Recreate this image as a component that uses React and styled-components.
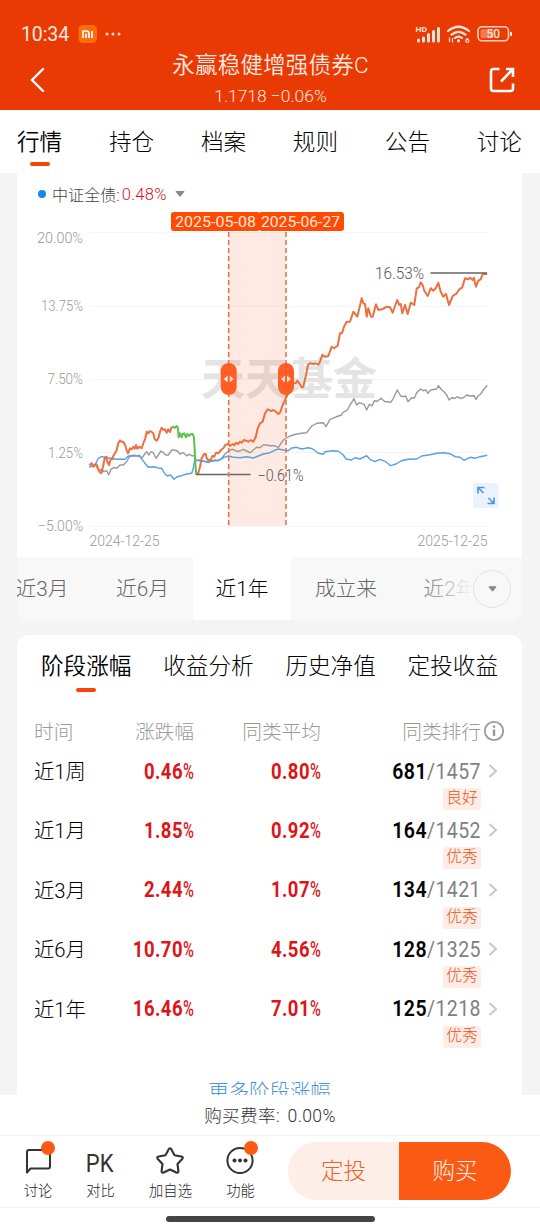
import React from "react";
import styled, { createGlobalStyle } from "styled-components";

const GlobalStyle = createGlobalStyle`
  * {
    box-sizing: border-box;
  }

  body {
    margin: 0;
    background: #f4f4f4;
    font-family: Roboto, "Noto Sans CJK SC", sans-serif;
    font-weight: 300;
    color: #111;
  }
`;

const Screen = styled.div`
  display: flex;
  flex-direction: column;
  width: 540px;
  height: 1230px;
  overflow: hidden;
  background: #f4f4f4;
  white-space: nowrap;
`;

const Header = styled.header`
  height: 110px;
  flex: none;
  background: #e93a03;
  color: #ffe9e0;
`;

const StatusBar = styled.div`
  display: flex;
  align-items: center;
  height: 50px;
  padding: 18px 27px 0 21px;
`;

const Clock = styled.span`
  width: 57px;
  font-size: 19.5px;
  font-weight: 400;
  letter-spacing: -0.1px;
`;

const StatusIcons = styled.div`
  display: flex;
  align-items: center;
  margin-left: auto;
`;

const TitleBar = styled.div`
  display: flex;
  align-items: center;
  justify-content: space-between;
  height: 60px;
  padding: 0 25px 0 29px;
`;

const Title = styled.div`
  display: flex;
  flex-direction: column;
  align-items: center;
  padding: 2px 0 0 7px;

  h1 {
    margin: 0;
    font-size: 22.5px;
    line-height: 30px;
    font-weight: 350;
    letter-spacing: 0.2px;
  }

  p {
    margin: 0;
    font-size: 17.4px;
    line-height: 32px;
  }
`;

const MainTabs = styled.nav`
  display: flex;
  justify-content: space-between;
  flex: none;
  height: 63px;
  padding: 16px 18px 0 17px;
  background: #fff;
`;

const Tab = styled.div`
  display: flex;
  flex-direction: column;
  align-items: center;
  font-size: 22.6px;
  line-height: 33px;
  font-weight: ${({ $active }) => ($active ? 350 : 300)};
  color: #000;

  &::after {
    content: "";
    width: 20px;
    height: 4px;
    margin-top: ${({ $gap }) => $gap || 4}px;
    border-radius: 2px;
    background: ${({ $active }) => ($active ? "#f4450b" : "transparent")};
  }
`;

const Content = styled.main`
  flex: 1;
  min-height: 0;
  overflow: hidden;
  padding: 0 18px 0 17px;
`;

const Card = styled.section`
  background: #fff;
  overflow: hidden;
  border-radius: ${({ $radius }) => $radius};
`;

const PerfCard = styled(Card)`
  margin-top: 15px;
`;

const Legend = styled.div`
  display: flex;
  align-items: center;
  height: 34px;
  padding: 8px 0 0 21px;
  font-size: 16.1px;
  color: #444;

  i {
    width: 8px;
    height: 8px;
    margin-right: 6px;
    border-radius: 50%;
    background: #1688e8;
  }

  b {
    margin: 0 8px 0 2px;
    font-size: 16.6px;
    font-weight: 350;
    color: #d8151b;
    letter-spacing: 0.2px;
  }
`;

const Chart = styled.svg`
  display: block;
  font-size: 15px;
  fill: #999;
`;

const RangeBar = styled.div`
  position: relative;
  height: 63px;
  overflow: hidden;
  background: #f8f8f8;
`;

const RangeList = styled.div`
  display: flex;
  width: 520px;
  height: 100%;
  margin-left: -25px;
`;

const Range = styled.div`
  flex: none;
  width: ${({ $width }) => $width}px;
  font-size: 20.7px;
  line-height: 65px;
  text-align: center;
  color: ${({ $active }) => ($active ? "#000" : "#666")};
  background: ${({ $active }) => ($active ? "#fff" : "transparent")};
`;

const RangeMore = styled.div`
  position: absolute;
  top: 0;
  right: 0;
  display: flex;
  align-items: center;
  justify-content: flex-end;
  width: 105px;
  height: 100%;
  padding-right: 11px;
  background: linear-gradient(90deg, rgba(248, 248, 248, 0), #f8f8f8 52%);

  span {
    display: grid;
    place-items: center;
    width: 38px;
    height: 38px;
    border: 1px solid #e2e2e2;
    border-radius: 50%;
  }
`;

const PerfTabs = styled.div`
  display: flex;
  justify-content: space-between;
  height: 70px;
  padding: 15px 24px 0;
`;

const Row = styled.div`
  display: grid;
  grid-template-columns: 60px 100px 127px 160px 24px;
  align-items: center;
  height: ${({ $head }) => ($head ? 51 : 30)}px;
  padding-left: 17px;
  color: ${({ $head }) => ($head ? "#999" : "#000")};
  font-size: ${({ $head }) => ($head ? 19.7 : 20.3)}px;
  text-align: right;

  > :first-child {
    text-align: left;
  }

  svg {
    justify-self: end;
  }
`;

const Label = styled.span`
  position: relative;
  top: -1px;
`;

const Period = styled.div`
  height: 59.4px;
`;

const Percent = styled.span`
  font-size: 22px;
  font-weight: 700;
  letter-spacing: 0.6px;
  color: #dd1418;
  transform: scaleX(0.84);
  transform-origin: right;

  small {
    display: inline-block;
    width: 13px;
    font-size: 22px;
    font-weight: 500;
    transform: scaleX(0.8);
    transform-origin: left;
  }
`;

const Rank = styled.span`
  font-size: 22px;
  font-weight: 400;
  letter-spacing: 0.5px;
  color: #808080;
  transform: scaleX(0.885);
  transform-origin: right;

  b {
    font-weight: 600;
    color: #000;
  }
`;

const Grade = styled.div`
  width: 38px;
  height: 22px;
  margin: 2px 0 0 426px;
  border-radius: 3px;
  background: #ffece5;
  color: #e2571e;
  font-size: 15.8px;
  line-height: 20px;
  text-align: center;
`;

const MoreLink = styled.div`
  margin-top: 24px;
  color: #4a94dc;
  font-size: 20.4px;
  line-height: 30px;
  text-align: center;
`;

const Footer = styled.footer`
  flex: none;
  height: 135px;
  background: #fff;
`;

const Fee = styled.div`
  height: 41px;
  border-bottom: 1px solid #f2f2f2;
  color: #333;
  font-size: 17.6px;
  line-height: 42px;
  letter-spacing: 0.35px;
  word-spacing: 3px;
  text-align: center;
`;

const ActionBar = styled.div`
  display: flex;
  align-items: center;
  height: 72px;
  padding-right: 29px;
  border-bottom: 1px solid #f2f2f2;
`;

const Action = styled.div`
  position: relative;
  display: flex;
  flex-direction: column;
  align-items: center;
  width: ${({ $width }) => $width}px;
  padding-top: 2px;
  color: #222;
  font-size: 14.3px;
  line-height: 22px;

  svg,
  strong {
    height: 34px;
    margin: 0 1px 2px 0;
  }

  strong {
    font-size: 26.5px;
    font-weight: 400;
    line-height: 37px;
    color: #333;
    transform: scaleX(0.83);
  }
`;

const Dot = styled.i`
  position: absolute;
  top: -1px;
  left: calc(50% + 3px);
  width: 14px;
  height: 14px;
  border-radius: 50%;
  background: #fb5a14;
`;

const Buttons = styled.div`
  display: flex;
  margin: 0 0 2px auto;
  border-radius: 29px;
  overflow: hidden;
`;

const Button = styled.button`
  width: ${({ $primary }) => ($primary ? 112 : 111)}px;
  height: 58px;
  padding: 0 0 2px;
  border: 0;
  background: ${({ $primary }) => ($primary ? "#fb5a14" : "#fdeee8")};
  color: ${({ $primary }) => ($primary ? "#fff0e8" : "#ec6027")};
  font: inherit;
  font-size: 22.6px;
`;

const HomeBar = styled.div`
  width: 209px;
  height: 6px;
  margin: 8px auto 0;
  border-radius: 3px;
  background: #444;
`;

const mainTabs = ["行情", "持仓", "档案", "规则", "公告", "讨论"];
const perfTabs = ["阶段涨幅", "收益分析", "历史净值", "定投收益"];

const ranges = [
  { label: "近3月", width: 100 },
  { label: "近6月", width: 101 },
  { label: "近1年", width: 98 },
  { label: "成立来", width: 110 },
  { label: "近2年", width: 98 },
];

const periods = [
  { label: "近1周", change: "0.46", average: "0.80", rank: 681, total: 1457, grade: "良好" },
  { label: "近1月", change: "1.85", average: "0.92", rank: 164, total: 1452, grade: "优秀" },
  { label: "近3月", change: "2.44", average: "1.07", rank: 134, total: 1421, grade: "优秀" },
  { label: "近6月", change: "10.70", average: "4.56", rank: 128, total: 1325, grade: "优秀" },
  { label: "近1年", change: "16.46", average: "7.01", rank: 125, total: 1218, grade: "优秀" },
];

const grid = [
  { label: "20.00%", y: 232.5, x: 37, text: 243 },
  { label: "13.75%", y: 306.5, x: 41, text: 310.5 },
  { label: "7.50%", y: 379.5, x: 47.5, text: 384 },
  { label: "1.25%", y: 452.5, x: 48, text: 458 },
  { label: "−5.00%", y: 526.5, x: 38, text: 531 },
];

// points are stored in thirds of a pixel from the given origin
const plot = (ox, oy, points) =>
  points
    .split(" ")
    .map((p) => {
      const [x, y] = p.split(",").map(Number);
      return `${(ox + x / 3).toFixed(1)},${(oy + y / 3).toFixed(1)}`;
    })
    .join(" ");

const fundStart = plot(0, 350, "268,345 275,340 280,350 287,343 292,352 298,365 304,370 309,350 314,325 319,320 322,335 327,345 333,325 337,328 340,318 345,310 350,300 355,280 360,271 364,275 370,275 375,285 380,300 384,310 390,295 395,298 400,290 404,296 408,285 412,296 418,290 425,295 430,280 436,265 440,245 445,250 450,243 455,246 460,250 464,268 470,272 476,262 480,245 485,233 490,240 495,238 500,248 505,238 510,246 515,230");
const fundDrop = plot(0, 350, "515,230 525,233 530,228 534,235 536,262 540,250 545,262 548,252 552,250 558,262 562,252 568,258 572,252 578,252 582,262 584,300 586,340 589,374");
const fundRise = [
  plot(0, 350, "589,372 595,370 600,350 605,325 612,312 617,312 620,325 625,330 632,330 637,318 643,320 648,308 655,310 663,300 670,295 676,285 684,282 690,288 698,282 703,286 708,278 714,282 720,275 725,278 732,270 738,272 745,275 752,270 760,275 767,262 773,235 780,220 788,215 795,190 803,178 808,180"),
  plot(270, 350, "3,183 10,180 18,185 25,192 30,188 38,165 45,150 55,130 65,118 70,100 77,100 82,92 88,100 95,112 100,110 108,75 114,45 120,40 130,42 135,40 145,44 150,35 157,14 165,20 175,18"),
  plot(270, 170, "185,530 192,535 203,527 210,490 216,490 222,470 230,455 240,455 250,425 262,440 275,385 280,400 285,402 290,440 295,415 303,440 308,440 318,403 325,420 335,418 343,415 350,410 360,412 368,428 375,408 382,390 388,405 392,402 397,430 405,405 413,432 422,398 433,405 440,355 447,352 452,337 458,345 463,362 473,378 482,355 490,362 497,355 505,338 512,365 520,380 528,372 537,405 548,378 560,370 568,358 577,352 585,325 595,328 600,323 608,330 612,323 618,350 625,332 632,328 638,312 652,312"),
].join(" ");
const average = [
  plot(0, 350, "268,352 280,345 290,342 298,362 305,358 312,365 320,362 326,374 333,358 342,352 350,355 360,345 370,345 380,335 388,320 400,317 410,318 418,316 425,325 432,315 440,305 447,315 452,305 460,308 468,325 475,315 483,303 490,308 497,315 505,315 515,300 523,300 532,303 540,312 550,308 560,317 568,313 575,317 584,317 586,332 600,330 615,335 625,338 635,332 645,330 655,332 665,325 675,312 690,300 700,298 710,304 720,303 730,298 740,303 750,308 760,300 770,292 780,293 790,285 800,285"),
  plot(270, 350, "0,287 12,287 25,292 40,270 60,258 80,252 95,250 110,248 125,228 140,220 160,218 168,230 180,208 195,202 205,198 215,195 218,188 232,180 240,165 252,146 260,165 268,158 282,163 290,180 298,163 306,168 313,152 322,154 333,145 345,155 353,155 362,157 370,145 382,120 392,138 400,140 407,138 414,155 425,143 433,145 440,128 452,117 460,122 468,120 474,130 482,120 500,117 505,107 515,120 522,125 530,135 537,150 545,143 555,145 562,140 570,145 580,143 590,135 600,138 612,137 618,148 625,137 632,132 640,120 652,106"),
].join(" ");
const bond = [
  plot(0, 350, "268,350 285,345 295,325 305,320 318,322 330,325 350,328 375,328 385,318 405,316 420,320 435,340 445,352 460,350 475,354 485,355 495,372 502,378 512,375 522,388 532,380 545,377 560,372 575,370 580,355 584,330 600,332 625,335 660,330 672,322 685,318 700,322 720,323 740,320 760,324 775,318 790,312"),
  plot(270, 350, "0,308 12,302 25,297 40,300 55,302 65,294 80,292 95,297 115,293 127,296 145,310 160,313 165,305 190,302 205,304 220,315 228,327 245,330 255,323 270,327 290,317 300,328 315,335 330,328 345,334 362,347 378,342 395,332 415,328 440,327 455,318 480,314 500,310 520,308 540,311 555,320 570,322 582,331 600,322 615,325 630,320 652,316"),
].join(" ");

function TrendChart() {
  return (
    <Chart width="505" height="350" viewBox="17 207 505 350">
      {grid.map((line) => (
        <g key={line.label}>
          <path d={`M90 ${line.y}H487`} stroke="#f5f5f5" />
          <text x={line.x} y={line.text} textLength={83 - line.x} lengthAdjust="spacingAndGlyphs">
            {line.label}
          </text>
        </g>
      ))}
      <text x="89.5" y="546" fontSize="14" textLength="70">
        2024-12-25
      </text>
      <text x="417.5" y="546" fontSize="14" textLength="70">
        2025-12-25
      </text>

      <text x="201" y="395" fontSize="44" fontWeight="700" textLength="176" fill="#e4e4e4">
        天天基金
      </text>
      <rect x="228.5" y="232" width="57.5" height="294" fill="#ff5a2a" fillOpacity="0.13" />

      <g fill="none" strokeLinejoin="round">
        <polyline points={average} stroke="#999" strokeWidth="1.4" />
        <polyline points={bond} stroke="#56a0e4" strokeWidth="1.4" />
        <polyline points={fundStart} stroke="#ec7040" strokeWidth="2" />
        <polyline points={fundRise} stroke="#ec7040" strokeWidth="2" />
        <polyline points={fundDrop} stroke="#5bc24d" strokeWidth="2" />
        <path d="M196 474.5H250.5M430.5 273H487" stroke="#666" strokeWidth="1.4" />
        <path d="M228.7 232V526M286 232V526" stroke="#e27850" strokeWidth="1.6" strokeDasharray="5 3" />
      </g>
      <g fill="#555" fontSize="16">
        <text x="375" y="279" textLength="49" lengthAdjust="spacingAndGlyphs">
          16.53%
        </text>
        <text x="257.5" y="480.5" textLength="46" lengthAdjust="spacingAndGlyphs">
          −0.61%
        </text>
      </g>

      <rect x="171" y="212" width="89" height="19" rx="3" fill="#fe4a03" />
      <rect x="258.5" y="212" width="85.5" height="19" rx="3" fill="#fe4a03" />
      <g fill="#ffe9df" fontSize="14.5" fontWeight="400">
        <text x="175" y="227" textLength="81" lengthAdjust="spacingAndGlyphs">
          2025-05-08
        </text>
        <text x="261" y="227" textLength="79" lengthAdjust="spacingAndGlyphs">
          2025-06-27
        </text>
      </g>

      {[228.7, 286].map((x) => (
        <g key={x}>
          <rect x={x - 8} y="363" width="16" height="32" rx="8" fill="#ff5f25" />
          <path d={`M${x} 363V395`} stroke="#e9551f" strokeDasharray="5 3" />
          <path d={`M${x - 1} 375.5v7l-4 -3.5zM${x + 1} 375.5v7l4 -3.5z`} fill="#ffe0d2" />
        </g>
      ))}

      <rect x="473" y="483" width="25.5" height="25" rx="2" fill="#e9f2fd" />
      <path
        d="M478 493.5v-6h6.500M478 487.5l5.500 5.500M494 497.500v6h-6.500M494 503.500l-5.500-5.500"
        fill="none"
        stroke="#4c93e0"
        strokeWidth="1.6"
      />
    </Chart>
  );
}

function Caret({ size = 10 }) {
  return (
    <svg width={size} height="6" viewBox="0 0 10 6">
      <path d="M1 .5h8L5 5.5z" fill="#888" stroke="#888" strokeLinejoin="round" />
    </svg>
  );
}

function PhoneStatus() {
  return (
    <StatusBar>
      <Clock>10:34</Clock>
      <svg width="46" height="20" viewBox="0 0 46 20">
        <rect x="0.5" y="1" width="18.5" height="18" rx="4.5" fill="#ff6c0a" />
        <path d="M5 14V7h3.500q2.500 0 2.500 2.500V14M8 9.500V14M14 7v7" fill="none" stroke="#fff" strokeWidth="1.7" />
        <g fill="#ffd9cc">
          <circle cx="29" cy="10" r="1.5" />
          <circle cx="35" cy="10" r="1.5" />
          <circle cx="41" cy="10" r="1.5" />
        </g>
      </svg>
      <StatusIcons>
        <svg width="98" height="20" viewBox="415 24 98 20" fill="#ffe4da">
          <text x="415.5" y="31.5" fontSize="8" fontWeight="700" textLength="11.5" lengthAdjust="spacingAndGlyphs">
            HD
          </text>
          <path
            d="M418.5 41v-1M423.5 41v-3M428.5 41v-6.500M433.5 41v-9.500M438.5 41v-12.500"
            stroke="#ffe4da"
            strokeWidth="3"
            strokeLinecap="round"
          />
          <path
            d="M448 31Q458.5 22.500 469 31M451.500 34.600Q458.500 29 465.500 34.600M455 38Q458.500 35.200 462 38"
            fill="none"
            stroke="#ffe4da"
            strokeWidth="2.2"
            strokeLinecap="round"
          />
          <circle cx="458.5" cy="40.8" r="1.6" />
          <path d="M449.5 37.500v4.500M452.500 38v4.500" stroke="#ffe4da" strokeWidth="1.2" />
          <text x="465" y="43" fontSize="8" fontWeight="700">
            6
          </text>
          <rect x="478" y="26.8" width="30.5" height="14" rx="4" fill="none" stroke="#ffd2c2" strokeWidth="1.6" />
          <rect x="480.5" y="29.3" width="13" height="9" rx="2" fill="#f8794f" />
          <rect x="510" y="31.7" width="2" height="4.500" rx="1" />
          <text x="486.5" y="38.2" fontSize="12" fontWeight="500" textLength="13.5">
            50
          </text>
        </svg>
      </StatusIcons>
    </StatusBar>
  );
}

export default function App() {
  return (
    <Screen>
      <GlobalStyle />
      <Header>
        <PhoneStatus />
        <TitleBar>
          <svg width="16" height="26" viewBox="0 0 16 26">
            <path d="M14 2L3 13l11 11" fill="none" stroke="#fff" strokeWidth="2.4" strokeLinecap="round" />
          </svg>
          <Title>
            <h1>永赢稳健增强债券C</h1>
            <p>1.1718 −0.06%</p>
          </Title>
          <svg width="26" height="26" viewBox="0 0 26 26" fill="none" stroke="#fff" strokeWidth="2.6">
            <path d="M10.5 2H4.500Q2 2 2 4.500v17Q2 24 4.500 24h17q2.500 0 2.500-2.500v-5" />
            <path d="M17 2h7v8M24 2L12 14.500" />
          </svg>
        </TitleBar>
      </Header>

      <MainTabs>
        {mainTabs.map((tab, i) => (
          <Tab key={tab} $active={i === 0} $gap={3}>
            {tab}
          </Tab>
        ))}
      </MainTabs>

      <Content>
        <Card $radius="0 0 12px 12px">
          <Legend>
            <i />
            中证全债:<b>0.48%</b>
            <Caret />
          </Legend>
          <TrendChart />
          <RangeBar>
            <RangeList>
              {ranges.map((range) => (
                <Range key={range.label} $width={range.width} $active={range.label === "近1年"}>
                  {range.label}
                </Range>
              ))}
            </RangeList>
            <RangeMore>
              <span>
                <Caret size={9} />
              </span>
            </RangeMore>
          </RangeBar>
        </Card>

        <PerfCard $radius="12px 12px 0 0">
          <PerfTabs>
            {perfTabs.map((tab, i) => (
              <Tab key={tab} $active={i === 0} $gap={5}>
                {tab}
              </Tab>
            ))}
          </PerfTabs>
          <Row $head>
            <span>时间</span>
            <span>涨跌幅</span>
            <span>同类平均</span>
            <span>同类排行</span>
            <svg width="22" height="22" viewBox="0 0 22 22" fill="none" stroke="#999" strokeWidth="1.8">
              <circle cx="11" cy="11" r="9.2" />
              <path d="M11 9.500V16M11 5.500v2.200" strokeWidth="2.4" />
            </svg>
          </Row>
          {periods.map((item) => (
            <Period key={item.label}>
              <Row>
                <Label>{item.label}</Label>
                <Percent>
                  {item.change}
                  <small>%</small>
                </Percent>
                <Percent>
                  {item.average}
                  <small>%</small>
                </Percent>
                <Rank>
                  <b>{item.rank}</b>/{item.total}
                </Rank>
                <svg width="17" height="16" viewBox="0 0 17 16">
                  <path d="M1.500 2l6.500 6-6.500 6" fill="none" stroke="#c8c8c8" strokeWidth="2" />
                </svg>
              </Row>
              <Grade>{item.grade}</Grade>
            </Period>
          ))}
          <MoreLink>更多阶段涨幅</MoreLink>
        </PerfCard>
      </Content>

      <Footer>
        <Fee>购买费率: 0.00%</Fee>
        <ActionBar>
          <Action $width={76}>
            <svg width="30" height="34" viewBox="0 0 30 34">
              <path
                d="M4 28.500V8q0-2 2-2h19q2 0 2 2v14.500q0 2-2 2H7.500z"
                fill="none"
                stroke="#333"
                strokeWidth="2"
                strokeLinejoin="round"
              />
            </svg>
            <Dot />
            讨论
          </Action>
          <Action $width={49}>
            <strong>PK</strong>
            对比
          </Action>
          <Action $width={91}>
            <svg width="32" height="34" viewBox="0 0 32 34">
              <path
                d="M14.700 5.200q1.300-2 2.600 0l3.200 6 6.800 1.300q2.400.6.900 2.500l-4.700 5 .9 7q.1 2.300-2 1.500l-6.400-3-6.400 3q-2.100.8-2-1.500l.9-7-4.700-5q-1.500-1.900.9-2.500l6.800-1.300z"
                fill="none"
                stroke="#333"
                strokeWidth="2.1"
                strokeLinejoin="round"
              />
            </svg>
            加自选
          </Action>
          <Action $width={49}>
            <svg width="30" height="34" viewBox="0 0 30 34">
              <circle cx="15" cy="16.500" r="12.600" fill="none" stroke="#333" strokeWidth="2" />
              <circle cx="9.500" cy="16.500" r="2" fill="#333" />
              <circle cx="15" cy="16.500" r="2" fill="#333" />
              <circle cx="20.500" cy="16.500" r="2" fill="#333" />
            </svg>
            <Dot />
            功能
          </Action>
          <Buttons>
            <Button>定投</Button>
            <Button $primary>购买</Button>
          </Buttons>
        </ActionBar>
        <HomeBar />
      </Footer>
    </Screen>
  );
}
